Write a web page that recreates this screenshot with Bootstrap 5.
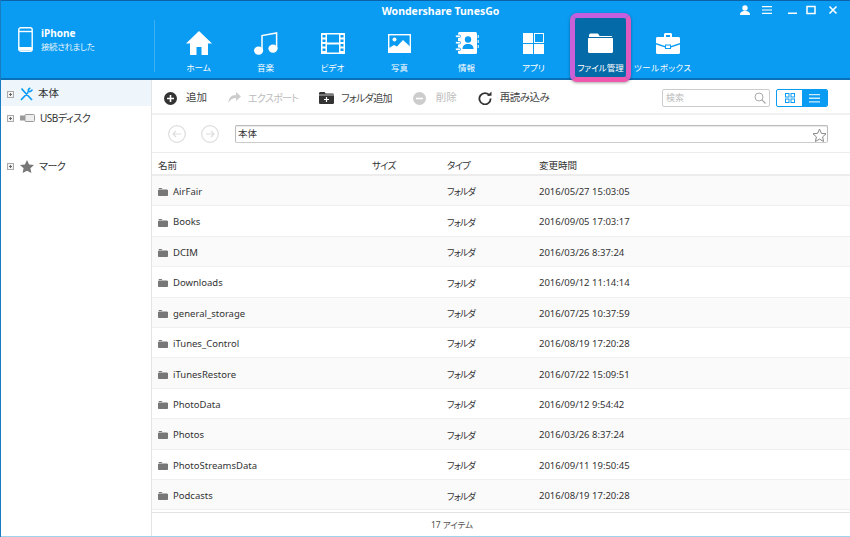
<!DOCTYPE html>
<html lang="ja">
<head>
  <meta charset="UTF-8">
  <meta name="viewport" content="width=device-width, initial-scale=1">
  <title>Wondershare TunesGo</title>
  <link href="https://cdn.jsdelivr.net/npm/bootstrap@5.3.3/dist/css/bootstrap.min.css" rel="stylesheet">
  <style>
    html, body { height: 100%; overflow: hidden; }
    body {
      font-family: "Noto Sans", "Noto Sans CJK JP", sans-serif;
      font-feature-settings: "palt";
      font-size: 10px;
      color: #333;
      background: #fff;
    }
    .app-win { height: 537px; border-left: 1px solid #1a7cc0; display: flex; flex-direction: column; position: relative; }
    .app-head { height: 80px; background: #0a9bf2; border-top: 1px solid #0b62a8; border-bottom: 2px solid #0a70b8; color: #fff; flex: none; position: relative; }
    .app-title { position: absolute; top: 3px; left: 30px; right: 0; text-align: center; font-size: 10.5px; font-weight: 700; line-height: 14px; }
    .win-btns { position: absolute; top: 4px; right: 12px; }
    .device-box { width: 153px; height: 100%; padding: 25px 0 0 17px; flex: none; }
    .device-name { font-size: 10px; font-weight: 700; line-height: 14px; }
    .device-state { font-size: 8.5px; letter-spacing: -.4px; line-height: 14px; opacity: .9; }
    .head-sep { width: 1px; height: 52px; background: #3ab0f5; margin-top: 19px; flex: none; }
    .tab-list { padding-left: 10px; }
    .tab-item { width: 67px; height: 77px; padding-top: 27px; text-align: center; font-size: 8.5px; line-height: 12px; }
    .tab-icon { height: 30px; display: flex; align-items: center; justify-content: center; margin-bottom: 4px; }
    .tab-on { position: relative; }
    .tab-on::before {
      content: ""; position: absolute; left: 3px; top: 12px; width: 61px; height: 69px;
      background: #056aa8; border: 5px solid #d85cc8; border-radius: 7px;
      border-color: #c45fe0 #e05ac0 #f058b0 #c860d8;
      box-shadow: 0 1px 3px rgba(0,0,0,.35);
    }
    .tab-on > * { position: relative; }
    .tab-shift { display: block; margin-right: 12px; white-space: nowrap; letter-spacing: .5px; }
    .side-pane { width: 151px; flex: none; border-right: 1px solid #e4e4e4; font-size: 10.5px; color: #333; }
    .side-row { height: 24px; padding-left: 6px; gap: 6px; }
    .side-on { height: 26px; padding-top: 2px; background: #eef6fc; }
    .side-label { margin-left: -1px; }
    .side-tight { font-size: 10px; letter-spacing: -.5px; }
    .plus-box { width: 7px; height: 7px; border: 1px solid #aaa; flex: none; position: relative; background: #f4f4f4; }
    .plus-box::before { content: ""; position: absolute; left: 1px; right: 1px; top: 2px; height: 1px; background: #666; }
    .plus-box::after { content: ""; position: absolute; top: 1px; bottom: 1px; left: 2px; width: 1px; background: #666; }
    .tool-bar { height: 35px; border-bottom: 2px solid #f1f1f1; padding: 3px 0 0 12px; font-size: 10.5px; color: #444; flex: none; }
    .tool-btn { gap: 7px; margin-right: 21px; }
    .tool-wide { gap: 10px; }
    .tool-off { color: #bbb; }
    .tool-tight { font-size: 10px; letter-spacing: -.7px; }
    .tool-snug { letter-spacing: -.5px; }
    .search-box { width: 108px; height: 18px; border: 1px solid #ccc; border-radius: 2px; padding: 0 3px; color: #bbb; font-size: 9px; margin-right: 6px; }
    .view-sw { width: 52px; height: 18px; border: 1px solid #0a9bf2; border-radius: 2px; margin-right: 22px; overflow: hidden; }
    .view-sw > div { flex: 1; }
    .view-on { background: #0a9bf2; }
    .path-bar { height: 38px; padding-left: 16px; border-bottom: 1px solid #ececec; flex: none; gap: 15px; }
    .path-input { width: 593px; height: 18px; margin-left: 1px; border: 1px solid #bbb; border-bottom-color: #ccc; border-radius: 2px; padding: 0 0 0 2px; font-size: 9.5px; line-height: 14px; box-shadow: inset 0 1px 1px #e8e8e8; }
    .grid-row { display: grid; grid-template-columns: 214px 75px 92px 1fr; padding-left: 6px; align-items: center; }
    .list-head { height: 23px; padding-top: 5px; border-bottom: 2px solid #ececec; font-size: 9.5px; flex: none; }
    .file-row { height: 30.42px; padding-top: 3px; border-bottom: 1px solid #efefef; font-size: 9.5px; }
    .file-row:nth-child(odd) { background: #fafafa; }
    .file-name { gap: 5px; }
    .kana-tight { letter-spacing: -.8px; }
    .type-cell { font-size: 9px; letter-spacing: -.8px; }
    .list-foot { height: 25px; padding-right: 98px; border-top: 1px solid #e2e2e2; font-size: 8.5px; color: #555; flex: none; }
    .bottom-line { position: absolute; left: 0; right: 0; bottom: 0; height: 1px; background: #9fd3ec; }
  </style>
</head>
<body>
<div class="app-win">
  <header class="app-head d-flex">
    <div class="app-title">Wondershare TunesGo</div>
    <div class="win-btns d-flex align-items-center">
      <svg width="12" height="10" viewBox="0 0 12 10" fill="#fff"><circle cx="6" cy="3" r="2.7"/><path d="M1 10c0-3 2-4 5-4s5 1 5 4z"/></svg>
      <svg style="margin-left:11px" width="10" height="10" viewBox="0 0 10 10" fill="#fff"><path d="M0 1h10v1.2H0zM0 4.4h10v1.2H0zM0 7.8h10V9H0z"/></svg>
      <svg style="margin-left:16px" width="9" height="10" viewBox="0 0 9 10" fill="#fff"><path d="M0 7.500h9V9H0z"/></svg>
      <svg style="margin-left:9px" width="10" height="10" viewBox="0 0 10 10" fill="none" stroke="#fff" stroke-width="1.500"><path d="M1 1.600h8v7H1z"/></svg>
      <svg style="margin-left:12px" width="10" height="10" viewBox="0 0 10 10" fill="none" stroke="#fff" stroke-width="1.600"><path d="M1.500 1.500l7 7M8.500 1.500l-7 7"/></svg>
    </div>
    <div class="device-box d-flex gap-2">
      <svg width="15" height="25" viewBox="0 0 15 25" fill="none" stroke="#fff" stroke-width="1.400" style="margin-top:1px"><rect x=".8" y=".8" width="13.400" height="23.400" rx="2"/><path d="M1 4.500h13"/><path d="M1 20h13v3.500H1z" fill="#fff" stroke="none"/></svg>
      <div>
        <div class="device-name">iPhone</div>
        <div class="device-state">接続されました</div>
      </div>
    </div>
    <div class="head-sep"></div>
    <nav class="tab-list d-flex">
      <div class="tab-item">
        <div class="tab-icon"><svg width="26" height="24" viewBox="0 0 26 24" fill="#fff"><path d="M13 0L0 12.500h4V24h6.500v-8h5v8H22V12.500h4z"/></svg></div><span>ホーム</span>
      </div>
      <div class="tab-item">
        <div class="tab-icon"><svg width="24" height="23" viewBox="0 0 24 23"><g fill="#fff"><ellipse cx="4.600" cy="18.600" rx="4.600" ry="4.200"/><ellipse cx="19" cy="16.600" rx="4.600" ry="4.200"/></g><path d="M8 18V3.600L22.600 1v15.500" fill="none" stroke="#fff" stroke-width="1.500"/></svg></div><span>音楽</span>
      </div>
      <div class="tab-item">
        <div class="tab-icon"><svg width="24" height="21" viewBox="0 0 24 21"><rect width="24" height="21" fill="#fff"/><g fill="#0a9bf2"><rect x="6" y="1.500" width="12" height="8"/><rect x="6" y="11.500" width="12" height="8"/><path d="M1.500 2h3v2.500h-3zM1.500 6.500h3V9h-3zM1.500 11h3v2.500h-3zM1.500 15.500h3V18h-3zM19.500 2h3v2.500h-3zM19.500 6.500h3V9h-3zM19.500 11h3v2.500h-3zM19.500 15.500h3V18h-3z"/></g></svg></div><span>ビデオ</span>
      </div>
      <div class="tab-item">
        <div class="tab-icon"><svg width="23" height="19" viewBox="0 0 23 19"><rect x=".7" y=".7" width="21.600" height="17.600" fill="none" stroke="#fff" stroke-width="1.400"/><circle cx="6.500" cy="5.500" r="2" fill="#fff"/><path d="M1 18v-4l5-3 3 1.500L15 6l7 6.500V18z" fill="#fff"/></svg></div><span>写真</span>
      </div>
      <div class="tab-item">
        <div class="tab-icon"><svg width="24" height="22" viewBox="0 0 24 22"><rect x="3" width="19" height="22" rx="1.500" fill="#fff"/><g fill="#fff" stroke="#0a9bf2" stroke-width=".8"><rect x=".5" y="3" width="5" height="2.500" rx="1"/><rect x=".5" y="9.500" width="5" height="2.500" rx="1"/><rect x=".5" y="16" width="5" height="2.500" rx="1"/></g><path d="M22.700 3h1v3h-1zM22.700 8h1v3h-1zM22.700 13h1v3h-1z" fill="#fff"/><circle cx="13" cy="7.500" r="3.200" fill="#0a9bf2"/><path d="M7.500 17c0-3.500 2-5 5.500-5s5.500 1.500 5.500 5z" fill="#0a9bf2"/></svg></div><span>情報</span>
      </div>
      <div class="tab-item">
        <div class="tab-icon"><svg width="21" height="21" viewBox="0 0 21 21"><g fill="#fff"><rect width="10" height="10"/><rect y="11" width="10" height="10"/><rect x="11" y="11" width="10" height="10"/></g><rect x="11.500" y=".5" width="9" height="9" fill="none" stroke="#fff"/></svg></div><span>アプリ</span>
      </div>
      <div class="tab-item tab-on">
        <div class="tab-icon"><svg width="25" height="20" viewBox="0 0 25 20" fill="#fff"><path d="M1 2.500C1 1 2 .5 3 .5h6c1 0 1.500.5 2 1.500l.5 1H23c.8 0 1.200.5 1.200 1H1z"/><path d="M0 6c0-.6.400-1 1-1h23c.6 0 1 .4 1 1v12.500c0 .9-.6 1.500-1.500 1.500h-22C.6 20 0 19.400 0 18.500z"/></svg></div><span>ファイル管理</span>
      </div>
      <div class="tab-item">
        <div class="tab-icon"><svg width="24" height="21" viewBox="0 0 24 21"><path d="M8 4V1.500C8 .6 8.600 0 9.500 0h5c.9 0 1.500.6 1.500 1.500V4h-2V2h-4v2z" fill="#fff"/><path d="M0 5.500C0 4.600.6 4 1.500 4h21c.9 0 1.500.6 1.500 1.500V10l-9 3v-1.500H9V13L0 10z" fill="#fff"/><path d="M0 11.500l9 3V16h6v-1.500l9-3v8c0 .9-.6 1.500-1.500 1.500h-21C.6 21 0 20.400 0 19.500z" fill="#fff"/><rect x="10" y="12.500" width="4" height="2.500" fill="#fff"/></svg></div><span class="tab-shift">ツールボックス</span>
      </div>
    </nav>
  </header>

  <div class="d-flex flex-grow-1" style="min-height:0">
    <aside class="side-pane">
      <div class="side-row side-on d-flex align-items-center">
        <span class="plus-box"></span>
        <svg width="13" height="14" viewBox="0 0 13 14" fill="none" stroke="#0a9bf2" stroke-width="1.700"><path d="M1 13L8 5.500M12 13L4.500 5M1.500 1.500l3 3.500M12.300 2.500c-.5 1.500-2.500 2.500-4 2-.2-1.500.5-3 2-3.500"/></svg>
        <span class="side-label">本体</span>
      </div>
      <div class="side-row d-flex align-items-center">
        <span class="plus-box"></span>
        <svg width="15" height="8" viewBox="0 0 15 8"><rect x="5" y=".5" width="9.500" height="7" rx="1" fill="#eee" stroke="#999"/><rect y="1.500" width="5" height="5" fill="#999"/></svg>
        <span class="side-label side-tight">USBディスク</span>
      </div>
      <div class="side-row d-flex align-items-center" style="margin-top:24px">
        <span class="plus-box"></span>
        <svg width="14" height="13" viewBox="0 0 14 13" fill="#777"><path d="M7 0l2.100 4.500 4.900.5-3.600 3.300 1 4.700L7 10.700 2.600 13l1-4.700L0 5l4.900-.5z"/></svg>
        <span class="side-label side-tight">マーク</span>
      </div>
    </aside>

    <main class="flex-grow-1 d-flex flex-column" style="min-width:0">
      <div class="tool-bar d-flex align-items-center">
        <div class="tool-btn d-flex align-items-center" style="gap:9px">
          <svg width="13" height="13" viewBox="0 0 13 13"><circle cx="6.500" cy="6.500" r="6.500" fill="#333"/><path d="M3 6.500h7M6.500 3v7" stroke="#fff" stroke-width="1.600"/></svg>追加
        </div>
        <div class="tool-btn tool-off d-flex align-items-center">
          <svg width="13" height="12" viewBox="0 0 13 12" fill="#ccc"><path d="M8 0l5 4.500L8 9V6C4.500 6 2 7.500 .5 11 .5 6 3 3 8 3z"/></svg><span class="tool-tight">エクスポート</span>
        </div>
        <div class="tool-btn d-flex align-items-center">
          <svg width="15" height="12" viewBox="0 0 15 12"><path d="M0 1.500C0 .6.500 0 1.500 0h4l1.200 1.500h7c.8 0 1.300.5 1.300 1.500v7.500c0 1-.6 1.500-1.500 1.500h-12C.6 12 0 11.500 0 10.500z" fill="#333"/><path d="M0 3h15" stroke="#fff" stroke-width=".7"/><path d="M5 7.500h5M7.500 5v5" stroke="#fff" stroke-width="1.200"/></svg><span class="tool-tight">フォルダ追加</span>
        </div>
        <div class="tool-btn tool-wide tool-off d-flex align-items-center">
          <svg width="13" height="13" viewBox="0 0 13 13"><circle cx="6.500" cy="6.500" r="6.500" fill="#ccc"/><path d="M3 6.500h7" stroke="#fff" stroke-width="1.600"/></svg>削除
        </div>
        <div class="tool-btn d-flex align-items-center" style="gap:8px">
          <svg width="14" height="14" viewBox="0 0 14 14" fill="none"><path d="M11.600 4.500A5.600 5.600 0 1 0 12.600 7.500" stroke="#333" stroke-width="1.800"/><path d="M9 4.800h4.500V.5z" fill="#333"/></svg><span class="tool-snug">再読み込み</span>
        </div>
        <div class="ms-auto d-flex align-items-center">
          <div class="search-box d-flex align-items-center justify-content-between">
            <span>検索</span>
            <svg width="12" height="12" viewBox="0 0 12 12" fill="none" stroke="#aaa"><circle cx="5" cy="5" r="4"/><path d="M8 8l3.500 3.500" stroke-width="1.200"/></svg>
          </div>
          <div class="view-sw d-flex">
            <div class="d-flex align-items-center justify-content-center">
              <svg width="10" height="10" viewBox="0 0 10 10" fill="none" stroke="#0a9bf2"><rect x=".5" y=".5" width="3.500" height="3.500"/><rect x="6" y=".5" width="3.500" height="3.500"/><rect x=".5" y="6" width="3.500" height="3.500"/><rect x="6" y="6" width="3.500" height="3.500"/></svg>
            </div>
            <div class="view-on d-flex align-items-center justify-content-center">
              <svg width="11" height="9" viewBox="0 0 11 9" fill="#fff" opacity=".8"><path d="M0 0h11v1.300H0zM0 3.600h11v1.300H0zM0 7.200h11v1.300H0z"/></svg>
            </div>
          </div>
        </div>
      </div>

      <div class="path-bar d-flex align-items-center">
        <svg width="18" height="18" viewBox="0 0 18 18" fill="none" stroke="#ddd" stroke-width="1.200"><circle cx="9" cy="9" r="8.300"/><path d="M13 9H5M8 6L5 9l3 3"/></svg>
        <svg width="18" height="18" viewBox="0 0 18 18" fill="none" stroke="#ddd" stroke-width="1.200"><circle cx="9" cy="9" r="8.300"/><path d="M5 9h8M10 6l3 3-3 3"/></svg>
        <div class="path-input d-flex align-items-center justify-content-between">
          <span>本体</span>
          <svg width="15" height="14" viewBox="0 0 15 14" fill="#fff" stroke="#888" style="margin-top:2px"><path d="M7.500 1l1.900 4.300 4.600.5-3.400 3.100 1 4.600-4.100-2.400-4.100 2.400 1-4.600L1 5.800l4.600-.5z"/></svg>
        </div>
      </div>

      <div class="grid-row list-head"><span>名前</span><span class="kana-tight">サイズ</span><span class="kana-tight">タイプ</span><span>変更時間</span></div>

      <div class="flex-grow-1" id="fileList" style="min-height:0;overflow:hidden"></div>

      <div class="list-foot d-flex align-items-center justify-content-center">17 アイテム</div>
    </main>
  </div>
  <div class="bottom-line"></div>
</div>

<script>
const files = [
  ['AirFair', '2016/05/27 15:03:05'],
  ['Books', '2016/09/05 17:03:17'],
  ['DCIM', '2016/03/26 8:37:24'],
  ['Downloads', '2016/09/12 11:14:14'],
  ['general_storage', '2016/07/25 10:37:59'],
  ['iTunes_Control', '2016/08/19 17:20:28'],
  ['iTunesRestore', '2016/07/22 15:09:51'],
  ['PhotoData', '2016/09/12 9:54:42'],
  ['Photos', '2016/03/26 8:37:24'],
  ['PhotoStreamsData', '2016/09/11 19:50:45'],
  ['Podcasts', '2016/08/19 17:20:28']
];
const folderIcon = '<svg width="10" height="8" viewBox="0 0 10 8" fill="#777"><path d="M.5 1C.5.4.9 0 1.400 0h2.200l.8 1H9c.4 0 .6.200.6.500H.5z"/><path d="M0 2h10v5.200c0 .5-.3.800-.8.800H.8C.3 8 0 7.700 0 7.200z"/></svg>';
document.getElementById('fileList').innerHTML = files.map(f => `
  <div class="grid-row file-row">
    <span class="file-name d-flex align-items-center">${folderIcon}${f[0]}</span>
    <span></span>
    <span class="type-cell">フォルダ</span>
    <span>${f[1]}</span>
  </div>`).join('');
</script>
<script src="https://cdn.jsdelivr.net/npm/bootstrap@5.3.3/dist/js/bootstrap.bundle.min.js"></script>
</body>
</html>
